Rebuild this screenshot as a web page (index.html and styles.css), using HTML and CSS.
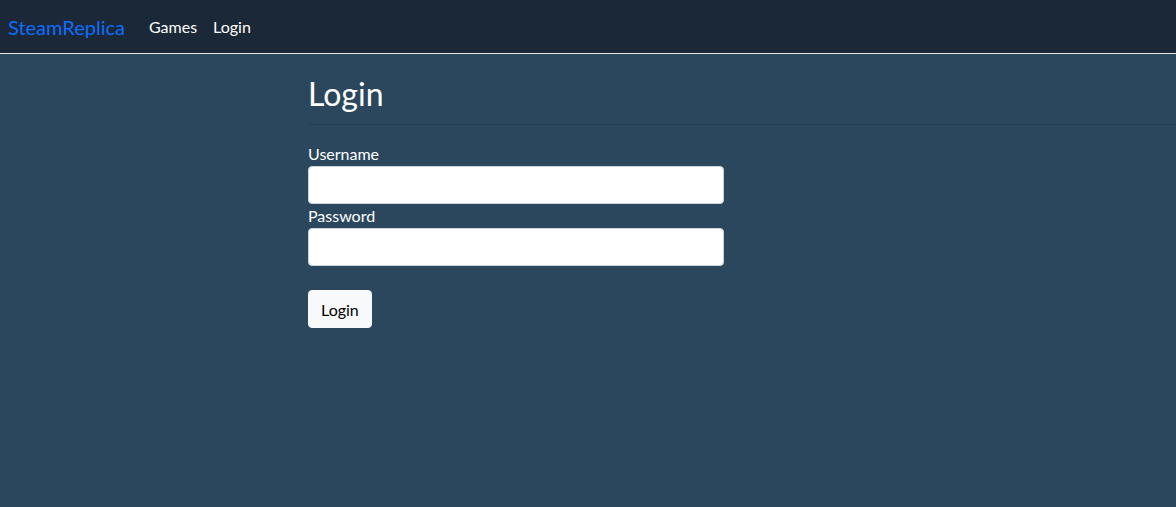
FILE: index.html
```html
<!DOCTYPE html>
<html lang="en">
<head>
<meta charset="utf-8">
<title>Login - SteamReplica</title>
<link rel="stylesheet" href="styles.css">
</head>
<body>
<nav class="navbar">
  <a class="brand" href="#">SteamReplica</a>
  <ul class="nav">
    <li><a class="nav-link" href="#">Games</a></li>
    <li><a class="nav-link" href="#">Login</a></li>
  </ul>
</nav>
<div class="layout">
  <aside class="side"></aside>
  <main class="content">
    <header class="page-header">
      <h1>Login</h1>
    </header>
    <form class="login-form">
      <label class="label" for="username">Username</label>
      <input class="input" id="username" type="text">
      <label class="label" for="password">Password</label>
      <input class="input" id="password" type="password">
      <button class="btn" type="button">Login</button>
    </form>
  </main>
</div>
</body>
</html>
```
FILE: styles.css
```css
* { box-sizing: border-box; }
html, body { height: 100%; }
body {
  margin: 0;
  background: #2a475e;
  color: #fff;
  font-family: Lato, "Liberation Sans", sans-serif;
  font-size: 16px;
  line-height: 1.5;
}
.navbar {
  display: flex;
  align-items: center;
  height: 54px;
  padding: 0 8px;
  background: #1b2838;
  border-bottom: 1px solid #e6e6e6;
}
.brand {
  font-size: 20px;
  color: #0d6efd;
  text-decoration: none;
  margin-right: 16px;
}
.nav {
  display: flex;
  list-style: none;
  margin: 0;
  padding: 0;
}
.nav-link {
  display: block;
  padding: 8px;
  color: #fff;
  text-decoration: none;
}
.layout {
  display: grid;
  grid-template-columns: 308px 1fr;
}
.page-header {
  padding-top: 21px;
  padding-bottom: 11px;
  border-bottom: 1px solid #243e52;
}
h1 {
  margin: 0;
  font-size: 32px;
  font-weight: 400;
  line-height: 1.2;
}
.login-form {
  display: flex;
  flex-direction: column;
  align-items: flex-start;
  padding-top: 17px;
}
.label {
  line-height: 24px;
  height: 24px;
}
.input {
  width: 416px;
  height: 38px;
  border: 1px solid #ced4da;
  border-radius: 4px;
  background: #fff;
}
.btn {
  margin-top: 24px;
  height: 38px;
  padding: 6px 12px;
  background: #f8f9fa;
  border: 1px solid #f8f9fa;
  border-radius: 4px;
  font-family: inherit;
  font-size: 16px;
  color: #000;
}
```
